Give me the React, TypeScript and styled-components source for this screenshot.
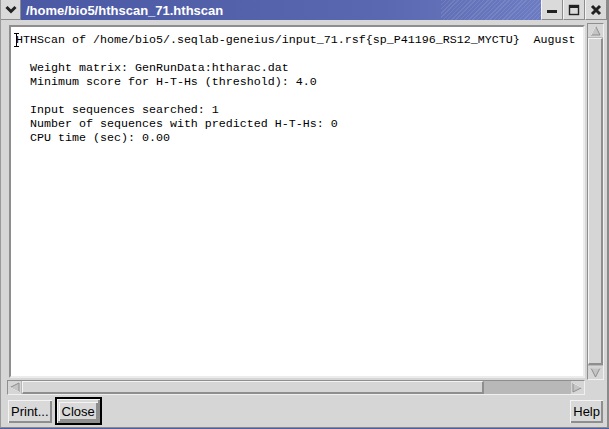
import React from 'react';
import styled, { createGlobalStyle } from 'styled-components';

const GlobalStyle = createGlobalStyle`
  html, body {
    margin: 0;
    padding: 0;
    background: #4f5fa6;
  }
  #root {
    width: 609px;
    height: 429px;
  }
`;

const Window = styled.div`
  width: 609px;
  height: 428px;
  background: #d6d6d6;
  display: flex;
  flex-direction: column;
  box-sizing: border-box;
  border-left: 1px solid #9a9a9a;
  border-right: 2px solid #8a8a8a;
  border-bottom: 1px solid #8a8a8a;
  overflow: hidden;
`;

const TitleBar = styled.div`
  height: 20px;
  display: flex;
  background: #d6d6d6;
`;

const MenuButton = styled.div`
  width: 19px;
  height: 19px;
  display: flex;
  align-items: center;
  justify-content: center;
  background: #dadada;
  border-right: 1px solid #8c8c8c;
  border-bottom: 1px solid #8c8c8c;
`;

const Title = styled.div`
  flex: 1;
  display: flex;
  align-items: center;
  padding-left: 5px;
  color: #fff;
  font-family: 'Liberation Sans', Arial, sans-serif;
  font-weight: bold;
  font-size: 13px;
  background:
    repeating-linear-gradient(135deg, rgba(255, 255, 255, 0.1) 0 1px, transparent 1px 3px) right / 100px 100% no-repeat,
    linear-gradient(to right, #4b58a4, #5968b0 70%, #6d7cc2);
`;

const WinButton = styled.div`
  width: 20px;
  height: 19px;
  display: flex;
  align-items: center;
  justify-content: center;
  background: #dadada;
  border-left: 1px solid #f4f4f4;
  border-right: 1px solid #8c8c8c;
  border-bottom: 1px solid #8c8c8c;
`;

const Body = styled.div`
  flex: 1;
  display: flex;
  flex-direction: column;
  padding: 3px 3px 0 6px;
  min-height: 0;
`;

const ScrollArea = styled.div`
  flex: 1;
  display: grid;
  grid-template-columns: 1fr 17px;
  grid-template-rows: 1fr 15px;
  column-gap: 2px;
  min-height: 0;
`;

const TextBox = styled.div`
  margin: 2px 0 2px 2px;
  background: #fff;
  border-top: 2px solid #8e8e8e;
  border-left: 2px solid #8e8e8e;
  border-right: 2px solid #ececec;
  border-bottom: 2px solid #ececec;
  overflow: hidden;
  position: relative;
`;

const Pre = styled.pre`
  margin: 0;
  padding: 6px 0 0 5px;
  font-family: 'Liberation Mono', 'Courier New', monospace;
  font-size: 11.67px;
  line-height: 14px;
  color: #000;
  white-space: pre;
`;

const Caret = styled.span`
  position: absolute;
  left: 3px;
  top: 6px;
  width: 5px;
  height: 14px;
  border-top: 1px solid #000;
  border-bottom: 1px solid #000;
  box-sizing: border-box;
  &::after {
    content: '';
    position: absolute;
    left: 2px;
    top: 0;
    bottom: 0;
    width: 1px;
    background: #000;
  }
`;

const VScroll = styled.div`
  display: flex;
  flex-direction: column;
  background: #b8b8b8;
  border: 1px solid #8e8e8e;
  border-right-color: #f0f0f0;
  border-bottom-color: #f0f0f0;
`;

const HScroll = styled.div`
  display: flex;
  background: #b8b8b8;
  border: 1px solid #8e8e8e;
  border-right-color: #f0f0f0;
  border-bottom-color: #f0f0f0;
`;

const Arrow = styled.div`
  flex: 0 0 13px;
  display: flex;
  align-items: center;
  justify-content: center;
  background: #d6d6d6;
`;

const Thumb = styled.div<{ $vertical?: boolean }>`
  background: #d6d6d6;
  border-top: 1px solid #f4f4f4;
  border-left: 1px solid #f4f4f4;
  border-right: 2px solid #8e8e8e;
  border-bottom: 2px solid #8e8e8e;
  box-sizing: border-box;
  margin: ${p => (p.$vertical ? '1px 0' : '0 1px')};
  flex: ${p => (p.$vertical ? '1' : '0 0 462px')};
`;

const Corner = styled.div``;

const ButtonRow = styled.div`
  height: 32px;
  display: flex;
  align-items: center;
  gap: 3px;
  padding: 0 1px;
`;

const Button = styled.button<{ $default?: boolean }>`
  height: ${p => (p.$default ? '28px' : '23px')};
  padding: 0 ${p => (p.$default ? '2px' : '3px')};
  background: #d9d9d9;
  color: #000;
  font-family: 'Liberation Sans', Arial, sans-serif;
  font-size: 13px;
  border: ${p => (p.$default ? '2px solid #000' : 'none')};
  box-shadow: inset 1px 1px 0 #f4f4f4, inset -2px -2px 0 #8e8e8e;
  display: flex;
  align-items: center;
  justify-content: center;
  cursor: pointer;
`;

const Inner = styled.span`
  padding: 0 3px;
  line-height: 19px;
  background: #d9d9d9;
  box-shadow: inset 1px 1px 0 #f4f4f4, inset -2px -2px 0 #8e8e8e;
`;

const Spacer = styled.div`
  flex: 1;
`;

type Dir = 'up' | 'down' | 'left' | 'right';

const ArrowIcon: React.FC<{ dir: Dir }> = ({ dir }) => {
  const pts = {
    up: '5.5,1 10,10 1,10',
    down: '1,1 10,1 5.5,10',
    left: '1,5.5 10,1 10,10',
    right: '1,1 10,5.5 1,10',
  }[dir];
  const p = pts.split(' ');
  const light = dir === 'up' || dir === 'left' ? [p[2], p[0]] : [p[0], p[1]];
  return (
    <svg width="11" height="11" viewBox="0 0 11 11">
      <polygon points={pts} fill="#c4c4c4" stroke="#8e8e8e" strokeWidth="1" />
      <polyline points={light.join(' ')} fill="none" stroke="#f4f4f4" strokeWidth="1" />
    </svg>
  );
};

const lines = [
  'HTHScan of /home/bio5/.seqlab-geneius/input_71.rsf{sp_P41196_RS12_MYCTU}  August',
  '',
  '  Weight matrix: GenRunData:htharac.dat',
  '  Minimum score for H-T-Hs (threshold): 4.0',
  '',
  '  Input sequences searched: 1',
  '  Number of sequences with predicted H-T-Hs: 0',
  '  CPU time (sec): 0.00',
];

const App: React.FC = () => {
  return (
    <>
      <GlobalStyle />
      <Window>
        <TitleBar>
          <MenuButton>
            <svg width="12" height="9" viewBox="0 0 12 9">
              <polyline points="1.5,2 6,6.5 10.5,2" fill="none" stroke="#222" strokeWidth="3" />
            </svg>
          </MenuButton>
          <Title>/home/bio5/hthscan_71.hthscan</Title>
          <WinButton>
            <svg width="12" height="12" viewBox="0 0 12 12">
              <rect x="1" y="6" width="10" height="3" fill="#222" />
            </svg>
          </WinButton>
          <WinButton>
            <svg width="12" height="12" viewBox="0 0 12 12">
              <rect x="1.5" y="1.5" width="9" height="9" fill="none" stroke="#222" strokeWidth="1.4" />
              <rect x="1" y="1" width="10" height="3" fill="#222" />
            </svg>
          </WinButton>
          <WinButton>
            <svg width="12" height="12" viewBox="0 0 12 12">
              <path d="M2 2 L10 10 M10 2 L2 10" stroke="#222" strokeWidth="3" />
            </svg>
          </WinButton>
        </TitleBar>
        <Body>
          <ScrollArea>
            <TextBox>
              <Caret />
              <Pre>{lines.join('\n')}</Pre>
            </TextBox>
            <VScroll>
              <Arrow><ArrowIcon dir="up" /></Arrow>
              <Thumb $vertical />
              <Arrow><ArrowIcon dir="down" /></Arrow>
            </VScroll>
            <HScroll>
              <Arrow><ArrowIcon dir="left" /></Arrow>
              <Thumb />
              <Spacer />
              <Arrow><ArrowIcon dir="right" /></Arrow>
            </HScroll>
            <Corner />
          </ScrollArea>
          <ButtonRow>
            <Button>Print...</Button>
            <Button $default>
              <Inner>Close</Inner>
            </Button>
            <Spacer />
            <Button>Help</Button>
          </ButtonRow>
        </Body>
      </Window>
    </>
  );
};

export default App;
